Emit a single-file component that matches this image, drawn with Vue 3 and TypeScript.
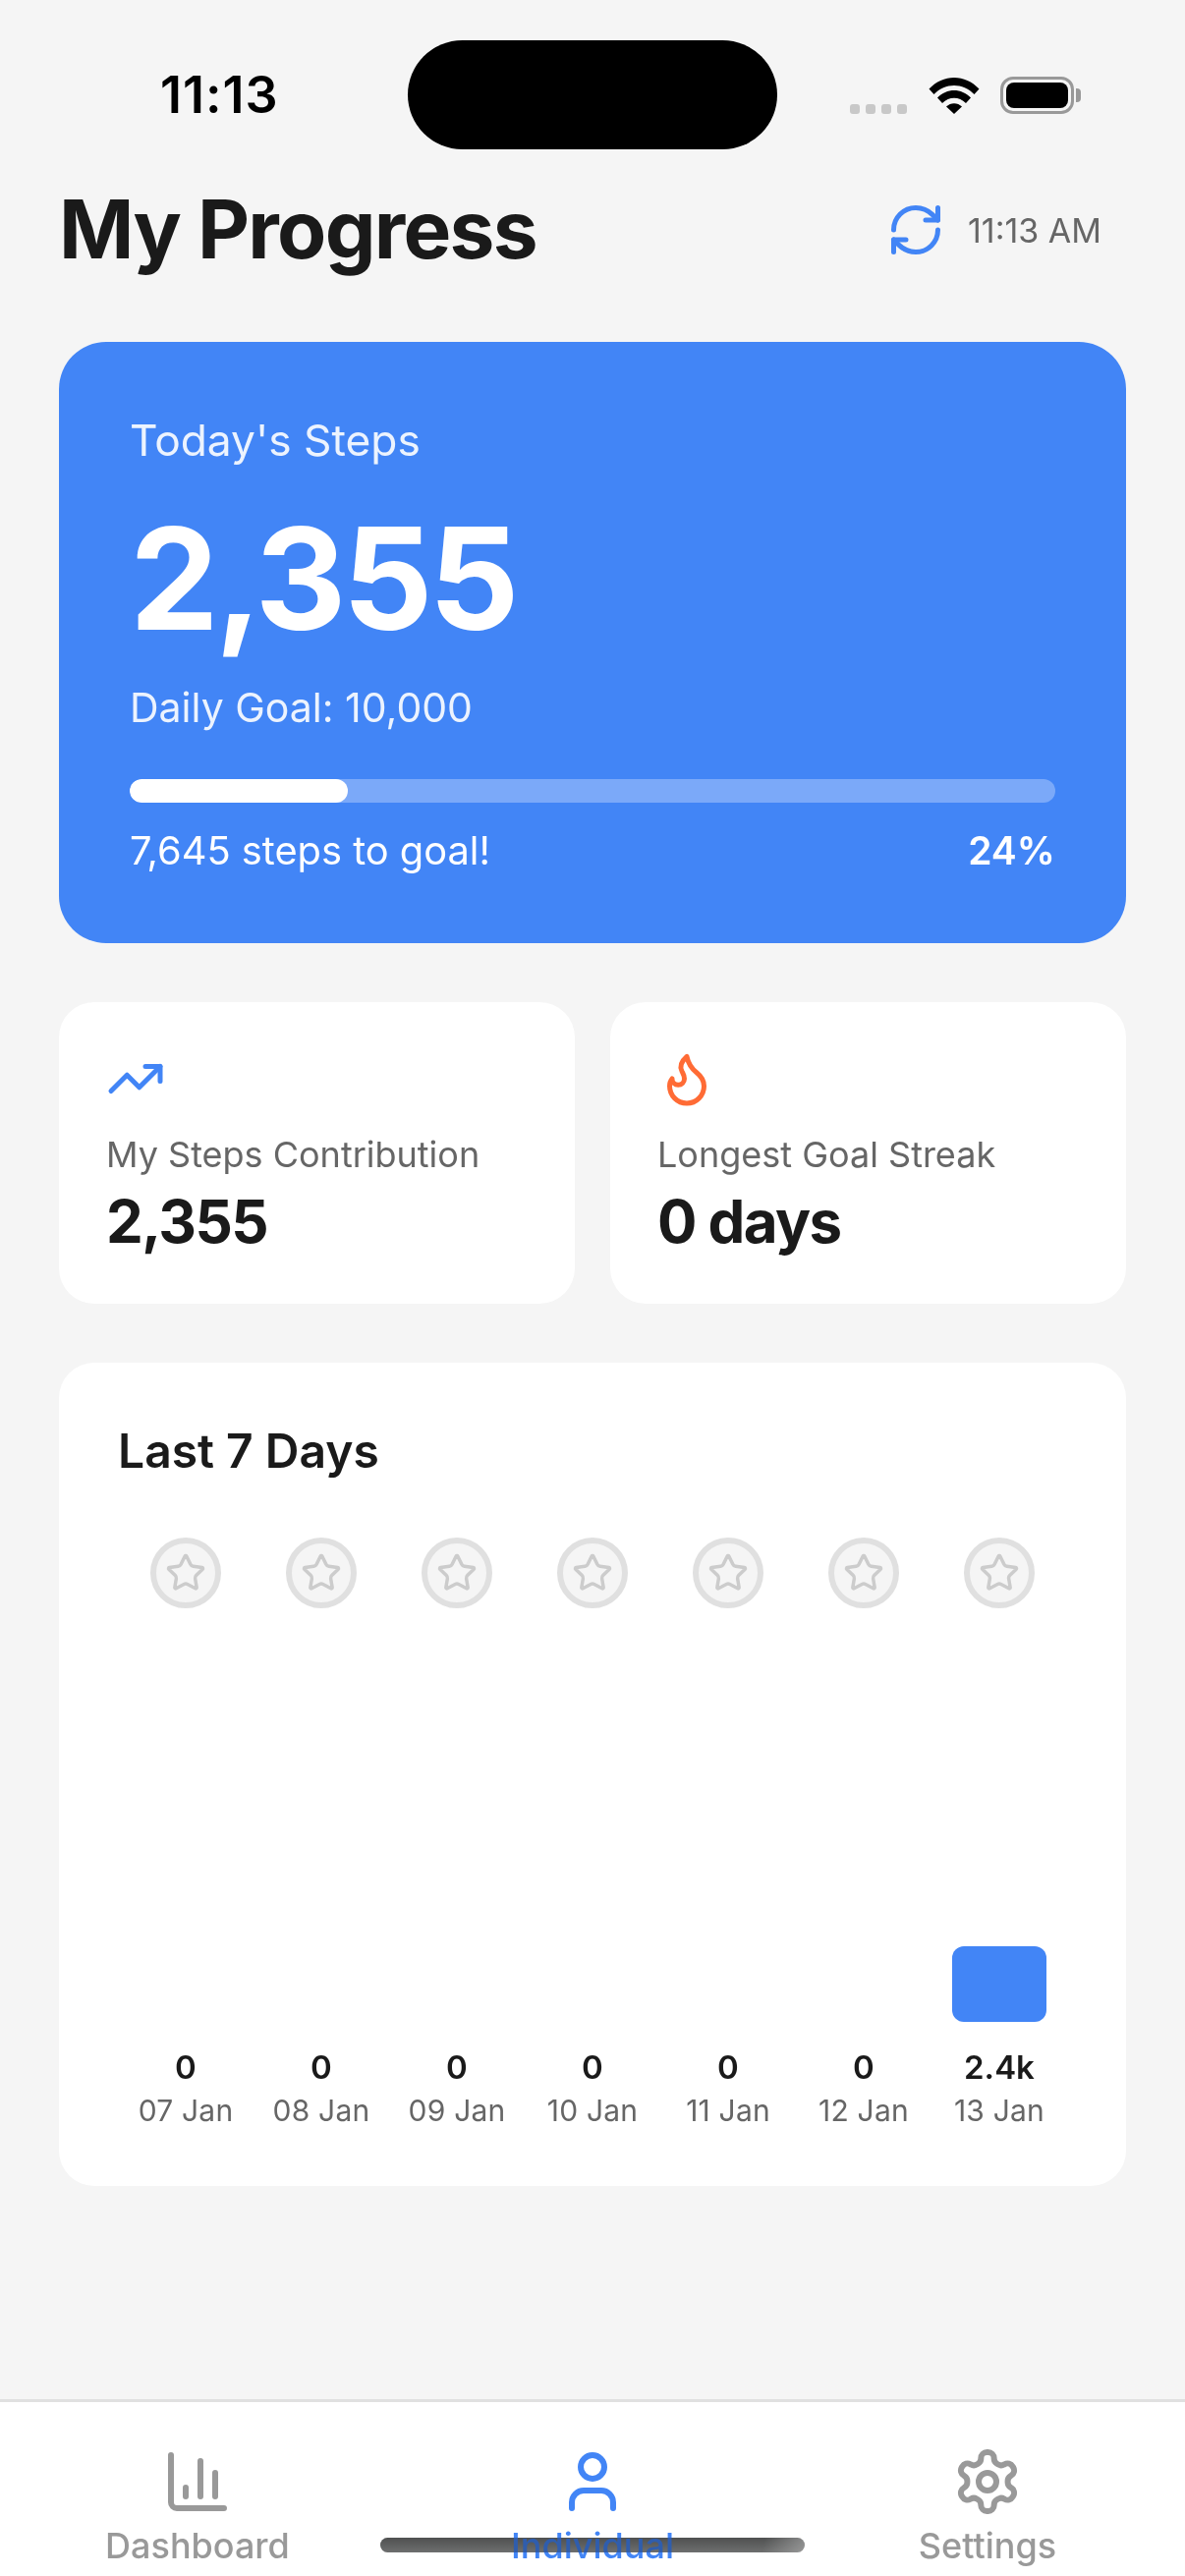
<script setup lang="ts">
interface Day {
  value: string
  date: string
  height: number
}

const days: Day[] = [
  { value: '0', date: '07 Jan', height: 0 },
  { value: '0', date: '08 Jan', height: 0 },
  { value: '0', date: '09 Jan', height: 0 },
  { value: '0', date: '10 Jan', height: 0 },
  { value: '0', date: '11 Jan', height: 0 },
  { value: '0', date: '12 Jan', height: 0 },
  { value: '2.4k', date: '13 Jan', height: 77 }
]

const steps = 2355
const goal = 10000
const percent = (steps / goal) * 100
</script>

<template>
  <div class="screen">
    <div class="island"></div>

    <div class="status">
      <span class="clock">11:13</span>
      <div class="status-right">
        <div class="signal">
          <i v-for="n in 4" :key="n"></i>
        </div>
        <svg class="wifi" width="52" height="38" viewBox="0 0 52 38">
          <path d="M0.5 12.5 C14.5 -3 37.5 -3 51.5 12.5 L46.5 18 C35 6 17 6 5.5 18 Z" fill="#000" />
          <path d="M9 21.5 C18.5 11.5 33.5 11.5 43 21.5 L38 27 C31 20 21 20 14 27 Z" fill="#000" />
          <path d="M18 30.5 C22.5 26 29.5 26 34 30.5 L26 38 Z" fill="#000" />
        </svg>
        <div class="battery">
          <div class="battery-body"><div class="battery-fill"></div></div>
          <div class="battery-cap"></div>
        </div>
      </div>
    </div>

    <main class="content">
      <header class="top">
        <h1>My Progress</h1>
        <div class="sync">
          <svg width="60" height="60" viewBox="0 0 24 24" fill="none" stroke="#4285f6" stroke-width="2" stroke-linecap="round" stroke-linejoin="round">
            <path d="M3 12a9 9 0 0 1 9-9 9.75 9.75 0 0 1 6.74 2.74L21 8" />
            <path d="M21 3v5h-5" />
            <path d="M21 12a9 9 0 0 1-9 9 9.75 9.75 0 0 1-6.74-2.74L3 16" />
            <path d="M8 16H3v5" />
          </svg>
          <span>11:13 AM</span>
        </div>
      </header>

      <section class="hero">
        <div class="hero-title">Today's Steps</div>
        <div class="hero-number">2,355</div>
        <div class="hero-goal">Daily Goal: 10,000</div>
        <div class="track">
          <div class="fill" :style="{ width: percent + '%' }"></div>
        </div>
        <div class="hero-foot">
          <span>7,645 steps to goal!</span>
          <b>24%</b>
        </div>
      </section>

      <section class="stats">
        <div class="stat">
          <svg width="60" height="60" viewBox="0 0 24 24" fill="none" stroke="#4285f6" stroke-width="2" stroke-linecap="round" stroke-linejoin="round">
            <path d="M22 7 13.5 15.5 8.5 10.5 2 17" />
            <path d="M16 7h6v6" />
          </svg>
          <div class="stat-label">My Steps Contribution</div>
          <div class="stat-value">2,355</div>
        </div>
        <div class="stat">
          <svg width="60" height="60" viewBox="0 0 24 24" fill="none" stroke="#ff6b35" stroke-width="2" stroke-linecap="round" stroke-linejoin="round">
            <path d="M8.5 14.5A2.5 2.5 0 0 0 11 12c0-1.38-.5-2-1-3-1.072-2.143-.224-4.054 2-6 .5 2.5 2 4.9 4 6.5 2 1.6 3 3.5 3 5.5a7 7 0 1 1-14 0c0-1.153.433-2.294 1-3a2.5 2.5 0 0 0 2.5 2.5z" />
          </svg>
          <div class="stat-label">Longest Goal Streak</div>
          <div class="stat-value">0 days</div>
        </div>
      </section>

      <section class="chart">
        <h2>Last 7 Days</h2>
        <div class="stars">
          <div v-for="day in days" :key="day.date" class="star-cell">
            <div class="star">
              <svg width="42" height="42" viewBox="0 0 24 24" fill="none" stroke="#cccccc" stroke-width="2" stroke-linecap="round" stroke-linejoin="round">
                <path d="M11.525 2.295a.53.53 0 0 1 .95 0l2.31 4.679a2.123 2.123 0 0 0 1.595 1.16l5.166.756a.53.53 0 0 1 .294.904l-3.736 3.638a2.123 2.123 0 0 0-.611 1.878l.882 5.14a.53.53 0 0 1-.771.56l-4.618-2.428a2.122 2.122 0 0 0-1.973 0L6.396 21.01a.53.53 0 0 1-.77-.56l.881-5.139a2.122 2.122 0 0 0-.611-1.879L2.16 9.795a.53.53 0 0 1 .294-.906l5.165-.755a2.122 2.122 0 0 0 1.597-1.16z" />
              </svg>
            </div>
          </div>
        </div>
        <div class="bars">
          <div v-for="day in days" :key="day.date" class="bar-cell">
            <div v-if="day.height" class="bar" :style="{ height: day.height + 'px' }"></div>
            <div class="bar-value">{{ day.value }}</div>
            <div class="bar-date">{{ day.date }}</div>
          </div>
        </div>
      </section>
    </main>

    <nav class="tabs">
      <div class="home-bar"></div>
      <div class="tab">
        <svg width="72" height="72" viewBox="0 0 24 24" fill="none" stroke="#999999" stroke-width="2" stroke-linecap="round" stroke-linejoin="round">
          <path d="M3 3v16a2 2 0 0 0 2 2h16" />
          <path d="M18 17V9" />
          <path d="M13 17V5" />
          <path d="M8 17v-3" />
        </svg>
        <span>Dashboard</span>
      </div>
      <div class="tab active">
        <svg width="72" height="72" viewBox="0 0 24 24" fill="none" stroke="#4285f6" stroke-width="2" stroke-linecap="round" stroke-linejoin="round">
          <path d="M19 21v-2a4 4 0 0 0-4-4H9a4 4 0 0 0-4 4v2" />
          <circle cx="12" cy="7" r="4" />
        </svg>
        <span>Individual</span>
      </div>
      <div class="tab">
        <svg width="72" height="72" viewBox="0 0 24 24" fill="none" stroke="#999999" stroke-width="2" stroke-linecap="round" stroke-linejoin="round">
          <path d="M12.22 2h-.44a2 2 0 0 0-2 2v.18a2 2 0 0 1-1 1.73l-.43.25a2 2 0 0 1-2 0l-.15-.08a2 2 0 0 0-2.73.73l-.22.38a2 2 0 0 0 .73 2.73l.15.1a2 2 0 0 1 1 1.72v.51a2 2 0 0 1-1 1.74l-.15.09a2 2 0 0 0-.73 2.73l.22.38a2 2 0 0 0 2.73.73l.15-.08a2 2 0 0 1 2 0l.43.25a2 2 0 0 1 1 1.73V20a2 2 0 0 0 2 2h.44a2 2 0 0 0 2-2v-.18a2 2 0 0 1 1-1.73l.43-.25a2 2 0 0 1 2 0l.15.08a2 2 0 0 0 2.73-.73l.22-.39a2 2 0 0 0-.73-2.73l-.15-.08a2 2 0 0 1-1-1.74v-.5a2 2 0 0 1 1-1.74l.15-.09a2 2 0 0 0 .73-2.73l-.22-.38a2 2 0 0 0-2.73-.73l-.15.08a2 2 0 0 1-2 0l-.43-.25a2 2 0 0 1-1-1.73V4a2 2 0 0 0-2-2z" />
          <circle cx="12" cy="12" r="3" />
        </svg>
        <span>Settings</span>
      </div>
      <div class="home-shade"></div>
    </nav>
  </div>
</template>

<style>
html,
body {
  margin: 0;
  background: #f5f5f5;
}
</style>

<style scoped>
.screen {
  position: relative;
  width: 1206px;
  height: 2622px;
  display: flex;
  flex-direction: column;
  overflow: hidden;
  background: #f5f5f5;
  color: #1a1a1a;
  font-family: Inter, "Liberation Sans", sans-serif;
}

.island {
  position: absolute;
  left: 415px;
  top: 41px;
  width: 376px;
  height: 111px;
  border-radius: 56px;
  background: #000;
}

.status {
  height: 170px;
  box-sizing: border-box;
  padding: 66px 106px 0 163px;
  display: flex;
  justify-content: space-between;
  align-items: flex-start;
  flex-shrink: 0;
}
.clock {
  font-size: 52px;
  line-height: 62px;
  font-weight: 600;
  letter-spacing: 1px;
  color: #000;
}
.status-right {
  display: flex;
  align-items: flex-end;
  margin-top: 12px;
}
.signal {
  display: flex;
  gap: 6px;
  margin-right: 22px;
}
.signal i {
  width: 10px;
  height: 10px;
  border-radius: 3px;
  background: #c8c8c8;
}
.wifi {
  margin-right: 21px;
}
.battery {
  display: flex;
  align-items: center;
}
.battery-body {
  width: 75px;
  height: 38px;
  box-sizing: border-box;
  border: 3px solid #999;
  border-radius: 13px;
  padding: 3px;
}
.battery-fill {
  height: 100%;
  border-radius: 8px;
  background: #000;
}
.battery-cap {
  width: 5px;
  height: 14px;
  margin-left: 2px;
  border-radius: 0 4px 4px 0;
  background: #999;
}

.content {
  flex: 1;
  padding: 0 60px;
  display: flex;
  flex-direction: column;
}

.top {
  height: 178px;
  display: flex;
  justify-content: space-between;
  align-items: flex-start;
}
h1 {
  margin: 14px 0 0;
  font-size: 82px;
  line-height: 100px;
  font-weight: 700;
  letter-spacing: -1.7px;
}
.sync {
  display: flex;
  align-items: center;
  gap: 23px;
  margin-top: 34px;
  margin-right: 25px;
  font-size: 34px;
  color: #666;
}

.hero {
  height: 612px;
  box-sizing: border-box;
  padding: 72px 72px 0;
  border-radius: 48px;
  background: #4285f6;
  color: #fff;
}
.hero-title {
  font-size: 44.3px;
  line-height: 56px;
  opacity: 0.9;
}
.hero-number {
  margin-top: 29px;
  font-size: 144px;
  line-height: 168px;
  font-weight: 700;
  letter-spacing: -4px;
}
.hero-goal {
  margin-top: 21px;
  font-size: 41px;
  line-height: 52px;
  opacity: 0.9;
}
.track {
  height: 24px;
  margin-top: 47px;
  border-radius: 12px;
  background: rgba(255, 255, 255, 0.3);
  overflow: hidden;
}
.fill {
  height: 100%;
  border-radius: 12px;
  background: #fff;
}
.hero-foot {
  display: flex;
  justify-content: space-between;
  margin-top: 24px;
  font-size: 39.8px;
  line-height: 50px;
}
.hero-foot b {
  font-weight: 600;
  font-size: 39px;
}

.stats {
  display: flex;
  gap: 36px;
  margin-top: 60px;
}
.stat {
  flex: 1;
  height: 307px;
  box-sizing: border-box;
  padding: 48px;
  border-radius: 36px;
  background: #fff;
}
.stat svg {
  display: block;
}
.stat-label {
  margin-top: 23px;
  font-size: 36px;
  line-height: 48px;
  color: #666;
}
.stat-value {
  margin-top: 6px;
  font-size: 60px;
  line-height: 76px;
  font-weight: 700;
  letter-spacing: -1.6px;
}

.chart {
  height: 838px;
  margin-top: 60px;
  box-sizing: border-box;
  padding: 60px 60px 55px;
  border-radius: 36px;
  background: #fff;
  display: flex;
  flex-direction: column;
}
h2 {
  margin: 0;
  font-size: 48px;
  line-height: 60px;
  font-weight: 600;
}
.stars {
  display: grid;
  grid-template-columns: repeat(7, 1fr);
  margin-top: 58px;
}
.star-cell {
  display: flex;
  justify-content: center;
}
.star {
  width: 72px;
  height: 72px;
  box-sizing: border-box;
  border: 6px solid #e0e0e0;
  border-radius: 50%;
  background: #f5f5f5;
  display: flex;
  align-items: center;
  justify-content: center;
}
.bars {
  flex: 1;
  display: grid;
  grid-template-columns: repeat(7, 1fr);
}
.bar-cell {
  display: flex;
  flex-direction: column;
  align-items: center;
  justify-content: flex-end;
}
.bar {
  width: 96px;
  border-radius: 12px;
  background: #4285f6;
  margin-bottom: 24px;
}
.bar-value {
  font-size: 33px;
  line-height: 44px;
  font-weight: 600;
}
.bar-date {
  font-size: 30px;
  line-height: 44px;
  letter-spacing: 0.2px;
  color: #666;
}

.tabs {
  position: relative;
  height: 180px;
  flex-shrink: 0;
  box-sizing: border-box;
  border-top: 3px solid #e0e0e0;
  padding-top: 45px;
  background: #fff;
  display: grid;
  grid-template-columns: repeat(3, 1fr);
}
.tab {
  position: relative;
  display: flex;
  flex-direction: column;
  align-items: center;
  font-size: 36px;
  line-height: 44px;
  font-weight: 500;
  color: #999;
}
.tab span {
  margin-top: 7px;
}
.tab.active {
  color: #4285f6;
}
/* home indicator sits half over the tab label, so it is two layers: one under the text, one tinting it */
.home-bar,
.home-shade {
  position: absolute;
  left: 387px;
  bottom: 24px;
  width: 432px;
  height: 15px;
  border-radius: 8px;
}
.home-bar {
  background:
    linear-gradient(100deg, transparent 90%, rgba(255, 255, 255, 0.6) 100%),
    linear-gradient(#707272, #9c9e9e);
}
.home-shade {
  background: #b3b3b3;
  mix-blend-mode: multiply;
}
</style>
